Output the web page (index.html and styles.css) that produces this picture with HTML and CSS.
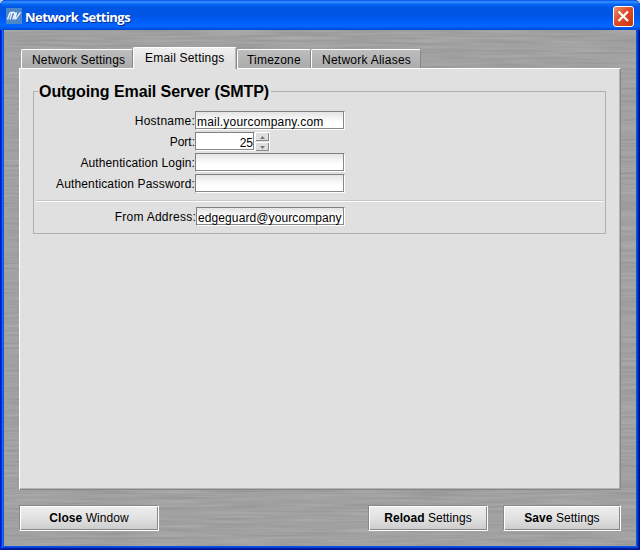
FILE: index.html
```html
<!DOCTYPE html>
<html lang="en">
<head>
<meta charset="utf-8">
<title>Network Settings</title>
<link rel="stylesheet" href="styles.css">
</head>
<body>
<div class="window">
  <header class="titlebar">
    <svg class="logo" width="16" height="16" viewBox="0 0 16 16"><rect width="16" height="16" fill="#4b86c8"/><path d="M1.5 11.5 3.4 6.2Q4 4.5 5.4 4.5H8Q9.2 4.5 8.8 5.7L6.8 11.5M5.9 5 4 11.5M10.6 4.5 8.9 9.8Q8.4 11.4 9.8 10.8L14.5 4.3" fill="none" stroke="#f4f8ff" stroke-width="1.3"/></svg>
    <h1 class="title">Network Settings</h1>
    <button class="close" aria-label="Close"><svg width="21" height="21" viewBox="0 0 21 21"><path d="M5.5 5.5 15 15M15 5.5 5.5 15" stroke="#fff" stroke-width="2.2"/></svg></button>
  </header>
  <main class="content">
    <svg class="brushed" width="632" height="516"><filter id="grain" x="0" y="0" width="100%" height="100%" color-interpolation-filters="sRGB"><feTurbulence type="fractalNoise" baseFrequency="0.015 0.4" numOctaves="2" seed="4"/><feColorMatrix values="0.12 0 0 0 0.57  0.12 0 0 0 0.57  0.12 0 0 0 0.57  0 0 0 0 1"/></filter><rect width="632" height="516" filter="url(#grain)"/></svg>
    <nav class="tabs">
      <div class="tab t1"><span>Network Settings</span></div>
      <div class="tab active t2"><span>Email Settings</span></div>
      <div class="tab t3"><span>Timezone</span></div>
      <div class="tab t4"><span>Network Aliases</span></div>
    </nav>
    <section class="panel">
      <div class="group">
        <h2 class="legend">Outgoing Email Server (SMTP)</h2>
        <div class="row"><span class="label wide">Hostname:</span><div class="field"><span class="host">mail.yourcompany.com</span></div></div>
        <div class="row"><span class="label port">Port:</span><div class="field number"><span>25</span></div><div class="spinner"><i><svg width="5" height="3"><path d="M0 3 2.5 0 5 3Z" fill="#777"/></svg></i><i><svg width="5" height="3"><path d="M0 0H5L2.5 3Z" fill="#777"/></svg></i></div></div>
        <div class="row"><span class="label">Authentication Login:</span><div class="field"></div></div>
        <div class="row"><span class="label password">Authentication Password:</span><div class="field"></div></div>
        <div class="separator"></div>
        <div class="row from"><span class="label wide">From Address:</span><div class="field"><span class="mail">edgeguard@yourcompany</span></div></div>
      </div>
    </section>
    <footer class="actions">
      <button class="action b1"><b>Close</b> Window</button>
      <button class="action b2"><b>Reload</b> Settings</button>
      <button class="action b3"><b>Save</b> Settings</button>
    </footer>
  </main>
</div>
</body>
</html>
```
FILE: styles.css
```css
* { box-sizing: border-box; }
body { margin: 0; background: #c9d3e4; font: 12px/14px "Liberation Sans", Arial, sans-serif; color: #000; }
.window {
  width: 640px; height: 550px; padding: 0 4px 4px; overflow: hidden;
  border-radius: 6px 6px 0 0; background: #0a55e8;
  box-shadow: inset 1px 0 #0019cf, inset -1px 0 #00138c, inset 0 -1px #00138c, inset 2px 0 #0831d9, inset -2px 0 #001ea0, inset 0 -2px #001ea0, inset 3px 0 #166aee, inset -3px 0 #0441d8, inset 0 -3px #0441d8;
}
.titlebar {
  display: flex; align-items: center; height: 30px; margin: 0 -4px; padding: 3px 6px 0;
  background: linear-gradient(#0044d5 0, #1b79ff 1px, #3990ff 2px, #0869f5 4px, #0057e5 7px, #0054e3 15px, #005cf5 20px, #0065ff 25px, #0061fb 27px, #0046d3 30px);
}
.logo { margin-bottom: 1px; }
.title { flex: 1; margin: 0 0 0 3px; font: bold 13px/16px "Open Sans", sans-serif; letter-spacing: -.55px; word-spacing: 1px; color: #fff; text-shadow: 1px 1px #0a2c8c; }
.close { width: 21px; height: 21px; padding: 0; border: 1px solid #fff; border-radius: 3px; background: linear-gradient(135deg, #ee8e70, #dd4c27 45%, #cc3508); }
.close svg { display: block; margin: -1px; }
.content { position: relative; height: 516px; padding: 17px 15px 0; background: #a0a0a0; }
.brushed { position: absolute; left: 0; top: 0; }
.tabs { position: relative; z-index: 1; display: flex; align-items: flex-end; height: 21px; padding-left: 2px; }
.tab {
  height: 19px; padding: 3px 0 0 10px; white-space: nowrap;
  border: 1px solid #fff; border-right-color: #888; border-bottom: 0; border-radius: 2px 2px 0 0;
  background: linear-gradient(#bdbdbd, #acacac);
}
.active { position: relative; height: 22px; margin-bottom: -1px; background: linear-gradient(#f0f0f0, #e0e0e0 70%); box-shadow: inset -1px 0 #bbb; }
.t1 { width: 112px; letter-spacing: .15px; }
.t2 { width: 104px; padding-left: 11px; letter-spacing: .2px; }
.t3 { width: 74px; padding-left: 9px; letter-spacing: .2px; }
.t4 { width: 110px; letter-spacing: .25px; }
.panel { position: relative; width: 602px; height: 422px; padding: 22px 15px 23px 14px; background: #e0e0e0; border: 1px solid #fff; border-right-color: #858585; border-bottom-color: #858585; box-shadow: inset -1px -1px #b4b4b4; }
.group { width: 573px; height: 143px; margin-left: -1px; border: 1px solid #b0b0b0; }
.legend { width: max-content; margin: -10px 0 10px 4px; padding: 1px 2px 0 1px; background: #e0e0e0; font-size: 16px; line-height: 17px; letter-spacing: -.07px; }
.row { display: flex; height: 21px; white-space: nowrap; }
.label { width: 161px; padding-top: 4px; text-align: right; letter-spacing: .12px; }
.wide { letter-spacing: .25px; }
.port { letter-spacing: 0; }
.password { letter-spacing: .15px; }
.field {
  width: 150px; height: 19px; margin-top: 1px; padding: 3px 0 0 1px; overflow: hidden;
  border: 1px solid #808080; border-right-color: #fff; border-bottom-color: #fff;
  box-shadow: inset -1px -1px #888;
  background: linear-gradient(#e4e4e4, #fff 10px);
}
.host { letter-spacing: .2px; }
.mail { letter-spacing: .1px; }
.number { width: 60px; padding-right: 1px; text-align: right; background: #fff; }
.spinner { display: flex; flex-direction: column; gap: 1px; width: 15px; margin-top: 1px; }
.spinner i { display: flex; align-items: center; justify-content: center; height: 9px; border: 1px solid #fff; border-width: 1px 1px 0 0; box-shadow: inset 1px 0 #fff, inset -1px -1px #888; background: #dedede; }
.spinner svg { flex: none; }
.separator { height: 2px; margin: 6px 2px 4px; border-top: 1px solid #c8c8c8; border-bottom: 1px solid #fff; }
.from .label { width: 162px; }
.from .field { width: 149px; }
.actions { position: relative; display: flex; height: 26px; margin-top: 15px; }
.action {
  height: 26px; padding: 0; font: 12px/14px "Liberation Sans", Arial, sans-serif; color: #000;
  border: 1px solid #888; border-right-color: #fff; border-bottom-color: #fff;
  background: linear-gradient(#eee, #e2e2e2 50%, #cbcbcb);
  box-shadow: inset 1px 1px #fff, inset -1px -1px #888; letter-spacing: .05px;
}
.b1 { width: 140px; }
.b2 { width: 120px; margin-left: 209px; }
.b3 { width: 118px; margin-left: 15px; }
```
